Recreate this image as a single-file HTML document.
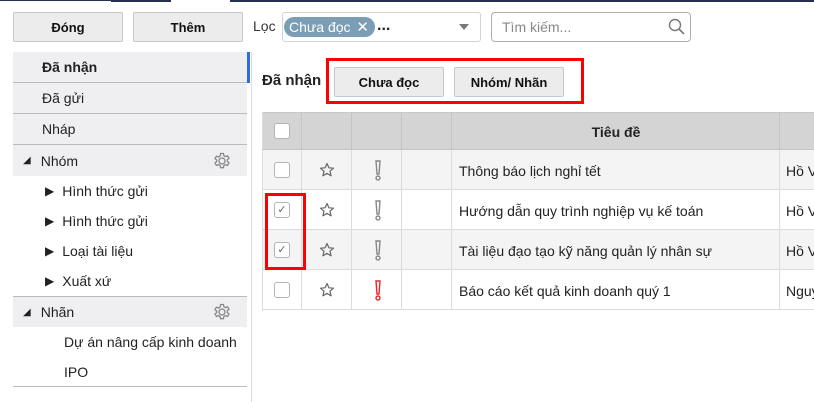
<!DOCTYPE html>
<html><head><meta charset="utf-8"><style>
*{box-sizing:border-box;margin:0;padding:0}
body{width:814px;height:402px;background:#fff;font-family:"Liberation Sans",Arial,sans-serif;font-size:14px;color:#222;position:relative;overflow:hidden}
.a{position:absolute;white-space:nowrap}
.btn{position:absolute;background:#ececec;border:1px solid #c8c8c8;border-radius:2px;font-weight:bold;font-size:13px;display:flex;align-items:center;justify-content:center;color:#111}
.si{position:absolute;left:13px;width:234px;display:flex;align-items:center;font-size:14px}
.g{background:#efeff1}
.cb{position:absolute;width:16px;height:16px;border:1px solid #b4b4b4;border-radius:3px;background:#fff}
.cell{position:absolute;border-right:1px solid #dcdcdc;border-bottom:1px solid #dcdcdc}
</style></head><body>
<div class="a" style="left:0;top:0;width:111px;height:1px;background:#243150"></div>
<div class="a" style="left:111px;top:0;width:60px;height:2px;background:#243150"></div>
<div class="a" style="left:230px;top:0;width:584px;height:2px;background:#243150"></div>

<div class="btn" style="left:13px;top:12px;width:110px;height:30px">Đóng</div>
<div class="btn" style="left:133px;top:12px;width:110px;height:30px">Thêm</div>
<div class="a" style="left:253px;top:18px;font-size:14px;color:#333">Lọc</div>
<div class="a" style="left:282px;top:12px;width:199px;height:30px;border:1px solid #d4d4d4;border-radius:3px"></div>
<div class="a" style="left:284px;top:17px;width:91px;height:20px;background:#7b9db5;border-radius:10px;color:#fff;font-size:14px;padding-left:5px;line-height:20px">Chưa đọc <span style="font-size:15px;margin-left:2px">✕</span></div>
<div class="a" style="left:377px;top:17px;font-weight:bold;font-size:16px;letter-spacing:0px">...</div>
<div class="a" style="left:459px;top:24px;width:0;height:0;border-left:5px solid transparent;border-right:5px solid transparent;border-top:6px solid #777"></div>
<div class="a" style="left:491px;top:12px;width:200px;height:30px;border:1px solid #adadad;border-radius:4px;color:#888;padding:6px 0 0 10px;font-size:14px">Tìm kiếm...</div>
<svg class="a" style="left:667px;top:17px" width="20" height="20" viewBox="0 0 20 20"><circle cx="8" cy="8" r="5.5" fill="none" stroke="#777" stroke-width="1.4"/><path d="M12 12l5 5" stroke="#777" stroke-width="1.6"/></svg>

<div class="si g" style="top:52px;height:31px;padding-left:29px;font-weight:bold;border-bottom:1px solid #bbb">Đã nhận</div>
<div class="a" style="left:247px;top:52px;width:3px;height:31px;background:#2a6fdb"></div>
<div class="si g" style="top:83px;height:31px;padding-left:29px;border-bottom:1px solid #bbb">Đã gửi</div>
<div class="si g" style="top:114px;height:31px;padding-left:29px;border-bottom:1px solid #bbb">Nháp</div>
<div class="si g" style="top:145px;height:31px;padding-left:10px"><span style="font-size:10px;margin-right:10px">◢</span>Nhóm</div>
<div class="si" style="top:176px;height:30px;padding-left:32px"><span style="font-size:12px;margin-right:8px">▶</span>Hình thức gửi</div>
<div class="si" style="top:206px;height:30px;padding-left:32px"><span style="font-size:12px;margin-right:8px">▶</span>Hình thức gửi</div>
<div class="si" style="top:236px;height:30px;padding-left:32px"><span style="font-size:12px;margin-right:8px">▶</span>Loại tài liệu</div>
<div class="si" style="top:266px;height:30px;padding-left:32px"><span style="font-size:12px;margin-right:8px">▶</span>Xuất xứ</div>
<div class="si g" style="top:296px;height:31px;padding-left:10px;border-top:1px solid #bbb"><span style="font-size:10px;margin-right:10px">◢</span>Nhãn</div>
<div class="si" style="top:327px;height:30px;padding-left:51px">Dự án nâng cấp kinh doanh</div>
<div class="si" style="top:357px;height:30px;padding-left:51px;border-bottom:1px solid #bbb">IPO</div>
<svg class="a" style="left:212px;top:151px" width="20" height="20" viewBox="0 0 20 20"><g fill="none" stroke="#888" stroke-width="1.3"><circle cx="10" cy="10" r="3"/><path d="M8.6 2.5h2.8l.5 2.2 1.6.9 2.1-.8 1.4 2.4-1.7 1.5v1.8l1.7 1.5-1.4 2.4-2.1-.8-1.6.9-.5 2.2H8.6l-.5-2.2-1.6-.9-2.1.8-1.4-2.4 1.7-1.5V9.1L3 7.6l1.4-2.4 2.1.8 1.6-.9z"/></g></svg>
<svg class="a" style="left:212px;top:302px" width="20" height="20" viewBox="0 0 20 20"><g fill="none" stroke="#888" stroke-width="1.3"><circle cx="10" cy="10" r="3"/><path d="M8.6 2.5h2.8l.5 2.2 1.6.9 2.1-.8 1.4 2.4-1.7 1.5v1.8l1.7 1.5-1.4 2.4-2.1-.8-1.6.9-.5 2.2H8.6l-.5-2.2-1.6-.9-2.1.8-1.4-2.4 1.7-1.5V9.1L3 7.6l1.4-2.4 2.1.8 1.6-.9z"/></g></svg>
<div class="a" style="left:251px;top:52px;width:1px;height:350px;background:#ddd"></div>

<div class="a" style="left:262px;top:72px;font-weight:bold;font-size:15px">Đã nhận</div>
<div class="a" style="left:326px;top:58px;width:258px;height:46px;border:3px solid #f00"></div>
<div class="btn" style="left:334px;top:67px;width:110px;height:30px">Chưa đọc</div>
<div class="btn" style="left:454px;top:67px;width:110px;height:30px">Nhóm/ Nhãn</div>

<div class="a" style="left:262px;top:112px;width:552px;height:199px;border-top:1px solid #c8c8c8;border-left:1px solid #dcdcdc"></div>
<div class="a" style="left:263px;top:113px;width:551px;height:37px;background:#d4d4d4"></div>
<div class="a" style="left:263px;top:150px;width:551px;height:40px;background:#f4f4f4"></div>
<div class="a" style="left:263px;top:230px;width:551px;height:40px;background:#f4f4f4"></div>
<div id="grid"></div>
<div class="a" style="left:452px;top:124px;width:328px;text-align:center;font-weight:bold;font-size:14px">Tiêu đề</div>

<div id="rows"></div>
<div class="a" style="left:265px;top:193px;width:41px;height:77px;border:3px solid #f00"></div>
<script>
var cols=[262,302,352,402,452,780,900],rows=[113,150,190,230,270,310],h='';
for(var r=0;r<5;r++)for(var c=0;c<6;c++){h+='<div class="cell" style="left:'+cols[c]+'px;top:'+rows[r]+'px;width:'+(cols[c+1]-cols[c])+'px;height:'+(rows[r+1]-rows[r])+'px;'+(r==0?'border-color:#c4c4c4':'')+'"></div>';}
document.getElementById('grid').innerHTML=h;
var t=['Thông báo lịch nghỉ tết','Hướng dẫn quy trình nghiệp vụ kế toán','Tài liệu đạo tạo kỹ năng quản lý nhân sự','Báo cáo kết quả kinh doanh quý 1'];
var s=['Hồ Văn','Hồ Văn','Hồ Văn','Nguyễn'];var o='<div class="cb" style="left:274px;top:123px"></div>';
var star='<path d="M8 1.5l1.9 4.3 4.6.4-3.5 3 1.1 4.6L8 11.4l-4.1 2.4 1.1-4.6-3.5-3 4.6-.4z" fill="none" stroke="#666" stroke-width="1.2" stroke-linejoin="round"/>';
for(var i=0;i<4;i++){var y=150+i*40;
o+='<div class="cb" style="left:274px;top:'+(y+12)+'px;font-size:11px;color:#666;text-align:center;line-height:14px">'+((i==1||i==2)?'✓':'')+'</div>';
o+='<svg class="a" style="left:319px;top:'+(y+12)+'px" width="16" height="16" viewBox="0 0 16 16">'+star+'</svg>';
o+='<svg class="a" style="left:373px;top:'+(y+10)+'px" width="10" height="22"><path d="M3 1h4l-1 13h-2z" fill="none" stroke="'+(i==3?'#e22':'#888')+'" stroke-width="1.4"/><circle cx="5" cy="18" r="2" fill="none" stroke="'+(i==3?'#e22':'#888')+'" stroke-width="1.4"/></svg>';
o+='<div class="a" style="left:459px;top:'+(y+13)+'px;font-size:14px">'+t[i]+'</div>';
o+='<div class="a" style="left:786px;top:'+(y+13)+'px;font-size:14px">'+s[i]+'</div>';}
document.getElementById('rows').innerHTML=o;
</script>
</body></html>
